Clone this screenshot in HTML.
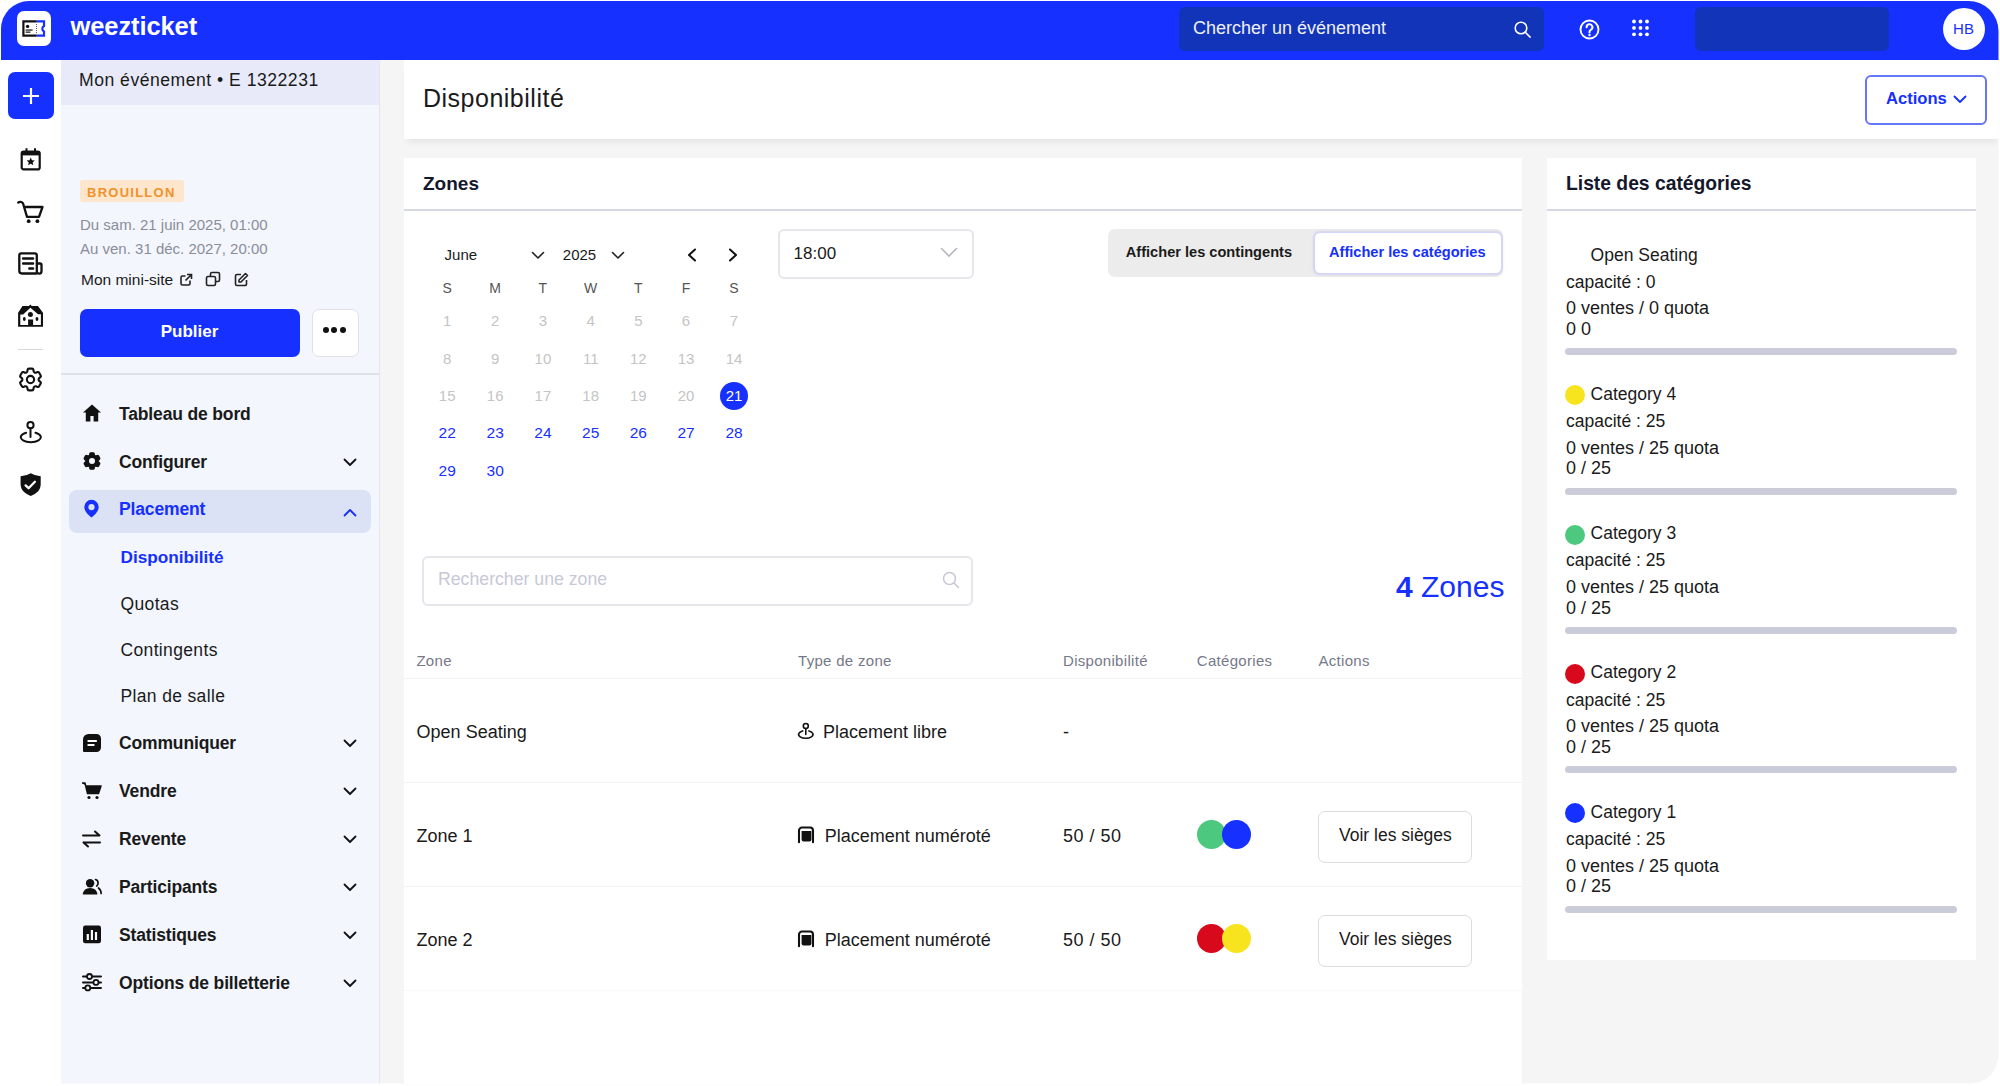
<!DOCTYPE html>
<html><head><meta charset="utf-8"><title>Disponibilité</title>
<style>
html,body{margin:0;padding:0;background:#fff;}
body{width:2000px;height:1086px;position:relative;overflow:hidden;font-family:"Liberation Sans",sans-serif;}
.t{position:absolute;line-height:1;white-space:nowrap;}
.r{position:absolute;}
#frame{position:absolute;left:0;top:0;width:2000px;height:1086px;overflow:hidden;clip-path:inset(1px 1.5px 2.5px 1px round 28px 30px 28px 0);}
</style></head><body><div id="frame">
<div class="r" style="left:380px;top:60px;width:1620px;height:1026px;background:#f5f5f5;"></div>
<div class="r" style="left:61px;top:60px;width:318px;height:1026px;background:#f3f6fd;border-right:1px solid #e4e6ee;"></div>
<div class="r" style="left:61px;top:60px;width:318px;height:45px;background:#e8eafa;"></div>
<div class="r" style="left:0px;top:0px;width:2000px;height:60px;background:#1530ff;"></div>
<div class="r" style="left:16.5px;top:11px;width:34.5px;height:35px;background:#fff;border-radius:7px;"></div>
<svg class="r" style="left:21px;top:19px;" width="25" height="19" viewBox="0 0 25 19">
<path d="M15.8 2.4H2.4v14.2h13.4" fill="none" stroke="#111" stroke-width="2.2"/>
<path d="M15.8 2.4H23v4.6a3 3 0 0 0 0 5.4v4.2h-7.2" fill="none" stroke="#1530ff" stroke-width="2.2"/>
<circle cx="6.6" cy="7.4" r="1.7" fill="#111"/>
<rect x="4.6" y="10.4" width="7" height="1.3" fill="#222"/>
<rect x="4.6" y="12.5" width="4.8" height="1.3" fill="#222"/>
<path d="M15.5 5v10" stroke="#333" stroke-width="0.8" stroke-dasharray="1 1"/>
</svg>
<div class="t " style="left:70.5px;top:14.31px;font-size:25.5px;font-weight:700;color:#fff;letter-spacing:-0.1px;">weezticket</div>
<div class="r" style="left:1178.5px;top:7px;width:365.5px;height:44px;background:#1234b8;border-radius:6px;"></div>
<div class="t " style="left:1193px;top:19.16px;font-size:18px;color:#eef0fb;">Chercher un événement</div>
<svg class="r" style="left:1513px;top:20px;" width="20" height="20" viewBox="0 0 20 20"><circle cx="8" cy="8" r="5.8" fill="none" stroke="#fff" stroke-width="1.6"/><path d="M12.3 12.3l4.8 4.8" stroke="#fff" stroke-width="1.6" stroke-linecap="round"/></svg>
<svg class="r" style="left:1578.2px;top:17.5px;" width="23" height="23" viewBox="0 0 23 23"><circle cx="11.5" cy="11.5" r="9" fill="none" stroke="#fff" stroke-width="1.9"/><path d="M8.6 9.2a2.9 2.9 0 1 1 4.2 2.6c-.9.5-1.3 1-1.3 2v.6" fill="none" stroke="#fff" stroke-width="2" stroke-linecap="round"/><circle cx="11.5" cy="17" r="1.2" fill="#fff"/></svg>
<svg class="r" style="left:1630px;top:18px;" width="21" height="20" viewBox="0 0 21 20"><circle cx="4.0" cy="3.5" r="1.9" fill="#fff"/><circle cx="4.0" cy="9.9" r="1.9" fill="#fff"/><circle cx="4.0" cy="16.3" r="1.9" fill="#fff"/><circle cx="10.5" cy="3.5" r="1.9" fill="#fff"/><circle cx="10.5" cy="9.9" r="1.9" fill="#fff"/><circle cx="10.5" cy="16.3" r="1.9" fill="#fff"/><circle cx="17.0" cy="3.5" r="1.9" fill="#fff"/><circle cx="17.0" cy="9.9" r="1.9" fill="#fff"/><circle cx="17.0" cy="16.3" r="1.9" fill="#fff"/></svg>
<div class="r" style="left:1695px;top:7px;width:193.5px;height:44px;background:#1234b8;border-radius:6px;"></div>
<div class="r" style="left:1942.5px;top:8px;width:42px;height:42px;background:#fff;border-radius:50%;"></div>
<div class="t " style="left:1963.5px;top:20.60px;font-size:15px;color:#1530ff;transform:translateX(-50%);">HB</div>
<div class="r" style="left:8px;top:72px;width:46px;height:47px;background:#1530ff;border-radius:7px;"></div>
<svg class="r" style="left:21px;top:86px;" width="20" height="20" viewBox="0 0 20 20"><path d="M10 2v16M2 10h16" stroke="#fff" stroke-width="2.2"/></svg>
<svg class="r" style="left:19px;top:147px;" width="24" height="25" viewBox="0 0 24 25"><rect x="2.7" y="4.6" width="18" height="17.8" rx="2" fill="none" stroke="#111" stroke-width="2.2"/><rect x="2.7" y="4.6" width="18" height="3.8" fill="#111"/><path d="M7.5 1.3v4M16 1.3v4" stroke="#111" stroke-width="2"/><path d="M11.7 10.6l1.25 2.6 2.85.3-2.15 1.9.65 2.8-2.6-1.5-2.6 1.5.65-2.8-2.15-1.9 2.85-.3z" fill="#111"/></svg>
<svg class="r" style="left:17px;top:199px;" width="27" height="25" viewBox="0 0 27 25"><path d="M1.2 3.6C2.6 2.4 5 2.6 6 4.3L10 17.9H22L25.5 8H7.6" fill="none" stroke="#111" stroke-width="2.3" stroke-linejoin="round" stroke-linecap="round"/><circle cx="11.7" cy="22.2" r="1.9" fill="#111"/><circle cx="20.4" cy="22.2" r="1.9" fill="#111"/></svg>
<svg class="r" style="left:14px;top:246px;" width="34" height="34" viewBox="0 0 34 34"><path d="M22.8 27.5H8A2.7 2.7 0 0 1 5.3 24.8V9.3A2 2 0 0 1 7.3 7.3H20.8A2 2 0 0 1 22.8 9.3V25.2A2.35 2.35 0 0 0 27.5 25.2V19A1.5 1.5 0 0 0 26 17.5H22.8" fill="none" stroke="#111" stroke-width="2.3" stroke-linejoin="round"/><path d="M9.1 12.5H19.1M9.1 17.5H19.1M15.3 22.5H19.1" stroke="#111" stroke-width="2.4" stroke-linecap="round"/></svg>
<svg class="r" style="left:14px;top:298px;" width="34" height="34" viewBox="0 0 34 34"><path fill-rule="evenodd" fill="#111" d="M4.1 14.7L8.5 8.1H15L16.4 6.6L17.8 8.1H23.9L29 14.7V28.8H4.1Z M6.3 16.4H9.1L16.4 9.7L24.1 16.3H26.9V26.9H19.1V21.6H14.1V26.9H6.3Z"/><circle cx="16.4" cy="16.5" r="2.5" fill="#111"/><ellipse cx="10.3" cy="21" rx="1.4" ry="2" fill="#111"/><ellipse cx="23" cy="21" rx="1.4" ry="2" fill="#111"/></svg>
<div class="r" style="left:18px;top:348.5px;width:25px;height:1.5px;background:#d8d8dc;"></div>
<svg class="r" style="left:16px;top:365px;" width="29" height="29" viewBox="0 0 24 24"><path d="M9.594 3.94c.09-.542.56-.94 1.11-.94h2.593c.55 0 1.02.398 1.11.94l.213 1.281c.063.374.313.686.645.87.074.04.147.083.22.127.325.196.72.257 1.075.124l1.217-.456a1.125 1.125 0 0 1 1.37.49l1.296 2.247a1.125 1.125 0 0 1-.26 1.431l-1.003.827c-.293.241-.438.613-.43.992a7.723 7.723 0 0 1 0 .255c-.008.378.137.75.43.991l1.004.827c.424.35.534.955.26 1.43l-1.298 2.247a1.125 1.125 0 0 1-1.369.491l-1.217-.456c-.355-.133-.75-.072-1.076.124a6.47 6.47 0 0 1-.22.128c-.331.183-.581.495-.644.869l-.213 1.281c-.09.543-.56.94-1.11.94h-2.594c-.55 0-1.019-.398-1.11-.94l-.213-1.281c-.062-.374-.312-.686-.644-.87a6.52 6.52 0 0 1-.22-.127c-.325-.196-.72-.257-1.076-.124l-1.217.456a1.125 1.125 0 0 1-1.369-.49l-1.297-2.247a1.125 1.125 0 0 1 .26-1.431l1.004-.827c.292-.24.437-.613.43-.991a6.932 6.932 0 0 1 0-.255c.007-.38-.138-.751-.43-.992l-1.004-.827a1.125 1.125 0 0 1-.26-1.43l1.297-2.247a1.125 1.125 0 0 1 1.37-.491l1.216.456c.356.133.751.072 1.076-.124.072-.044.146-.086.22-.128.332-.183.582-.495.644-.869l.214-1.28Z" fill="none" stroke="#111" stroke-width="1.75" stroke-linejoin="round"/><circle cx="12" cy="12" r="3" fill="none" stroke="#111" stroke-width="1.75"/></svg>
<svg class="r" style="left:19px;top:420px;" width="25" height="25" viewBox="0 0 25 25"><circle cx="11.5" cy="5.2" r="3.1" fill="none" stroke="#111" stroke-width="2"/><path d="M11.5 8.3v8.6" stroke="#111" stroke-width="2" stroke-linecap="round"/><path d="M7.1 12.8A10 5 0 1 0 16.5 12.8" fill="none" stroke="#111" stroke-width="2" stroke-linecap="round"/></svg>
<svg class="r" style="left:19px;top:472px;" width="24" height="26" viewBox="0 0 24 26"><path d="M11.8 1.2Q16 3.8 21.7 4.3V12.2C21.7 18 17.5 21.8 11.8 23.9 6.1 21.8 1.6 18 1.6 12.2V4.3Q7.6 3.8 11.8 1.2Z" fill="#111"/><path d="M6.6 13.4l3 2.8 6.3-6.4" fill="none" stroke="#fff" stroke-width="2.3" stroke-linecap="round" stroke-linejoin="round"/></svg>
<div class="t " style="left:79px;top:71.50px;font-size:17.6px;color:#1a1a1a;letter-spacing:0.5px;">Mon événement • E 1322231</div>
<div class="r" style="left:79.5px;top:180.3px;width:104px;height:21.7px;background:#fde6cc;border-radius:3px;"></div>
<div class="t " style="left:87px;top:185.90px;font-size:13px;font-weight:700;color:#f0922a;letter-spacing:1.25px;">BROUILLON</div>
<div class="t " style="left:80px;top:217.20px;font-size:15px;color:#8a8d99;">Du sam. 21 juin 2025, 01:00</div>
<div class="t " style="left:80px;top:240.80px;font-size:15px;color:#8a8d99;">Au ven. 31 déc. 2027, 20:00</div>
<div class="t " style="left:81px;top:271.88px;font-size:15.5px;color:#1a1a1a;">Mon mini-site</div>
<svg class="r" style="left:179px;top:273px;" width="14" height="14" viewBox="0 0 14 14"><path d="M11 7.5v3A1.5 1.5 0 0 1 9.5 12H3.5A1.5 1.5 0 0 1 2 10.5V4.5A1.5 1.5 0 0 1 3.5 3h3" fill="none" stroke="#222" stroke-width="1.6"/><path d="M8 1.5h4.5V6M12.5 1.5L6.5 7.5" fill="none" stroke="#222" stroke-width="1.6"/></svg>
<svg class="r" style="left:205px;top:271px;" width="16" height="16" viewBox="0 0 16 16"><rect x="1.5" y="5.5" width="9" height="9" rx="1.5" fill="none" stroke="#222" stroke-width="1.6"/><path d="M5.5 5.5V3a1.5 1.5 0 0 1 1.5-1.5h6A1.5 1.5 0 0 1 14.5 3v6a1.5 1.5 0 0 1-1.5 1.5h-2.5" fill="none" stroke="#222" stroke-width="1.6"/></svg>
<svg class="r" style="left:234px;top:272.3px;" width="15" height="15" viewBox="0 0 15 15"><path d="M7 2.5H3a1.5 1.5 0 0 0-1.5 1.5v8A1.5 1.5 0 0 0 3 13.5h8a1.5 1.5 0 0 0 1.5-1.5V8" fill="none" stroke="#222" stroke-width="1.6"/><path d="M11.5 1.5l2 2-6.5 6.5H5V8z" fill="none" stroke="#222" stroke-width="1.6" stroke-linejoin="round"/></svg>
<div class="r" style="left:79.5px;top:308.5px;width:220px;height:48.5px;background:#1530ff;border-radius:7px;"></div>
<div class="t " style="left:189.5px;top:323.41px;font-size:17px;font-weight:700;color:#fff;transform:translateX(-50%);">Publier</div>
<div class="r" style="left:311.5px;top:308.5px;width:47.5px;height:48.5px;background:#fff;border:1px solid #dfe1e6;border-radius:7px;box-sizing:border-box;"></div>
<div class="r" style="left:322.7px;top:327.2px;width:6.3px;height:6.3px;background:#111;border-radius:50%;"></div>
<div class="r" style="left:331.09999999999997px;top:327.2px;width:6.3px;height:6.3px;background:#111;border-radius:50%;"></div>
<div class="r" style="left:339.5px;top:327.2px;width:6.3px;height:6.3px;background:#111;border-radius:50%;"></div>
<div class="r" style="left:61px;top:373px;width:318px;height:2px;background:#dfe1e8;"></div>
<div class="r" style="left:69px;top:490px;width:302px;height:43px;background:#dce2f5;border-radius:8px;"></div>
<div class="t " style="left:119px;top:405.79px;font-size:17.5px;font-weight:700;color:#1a1a1a;letter-spacing:-0.15px;">Tableau de bord</div>
<div class="t " style="left:119px;top:453.89px;font-size:17.5px;font-weight:700;color:#1a1a1a;letter-spacing:-0.15px;">Configurer</div>
<svg class="r" style="left:343px;top:457.7px;" width="14" height="9" viewBox="0 0 14 9"><path d="M1.5 1.5l5.5 5.5 5.5-5.5" fill="none" stroke="#111" stroke-width="1.8" stroke-linecap="round" stroke-linejoin="round"/></svg>
<div class="t " style="left:119px;top:501.19px;font-size:17.5px;font-weight:700;color:#1530ff;letter-spacing:-0.15px;">Placement</div>
<svg class="r" style="left:343px;top:508px;" width="14" height="9" viewBox="0 0 14 9"><path d="M1.5 7.5l5.5-5.5 5.5 5.5" fill="none" stroke="#1530ff" stroke-width="1.8" stroke-linecap="round" stroke-linejoin="round"/></svg>
<div class="t " style="left:119px;top:735.49px;font-size:17.5px;font-weight:700;color:#1a1a1a;letter-spacing:-0.15px;">Communiquer</div>
<svg class="r" style="left:343px;top:739.3px;" width="14" height="9" viewBox="0 0 14 9"><path d="M1.5 1.5l5.5 5.5 5.5-5.5" fill="none" stroke="#111" stroke-width="1.8" stroke-linecap="round" stroke-linejoin="round"/></svg>
<div class="t " style="left:119px;top:783.19px;font-size:17.5px;font-weight:700;color:#1a1a1a;letter-spacing:-0.15px;">Vendre</div>
<svg class="r" style="left:343px;top:787px;" width="14" height="9" viewBox="0 0 14 9"><path d="M1.5 1.5l5.5 5.5 5.5-5.5" fill="none" stroke="#111" stroke-width="1.8" stroke-linecap="round" stroke-linejoin="round"/></svg>
<div class="t " style="left:119px;top:831.19px;font-size:17.5px;font-weight:700;color:#1a1a1a;letter-spacing:-0.15px;">Revente</div>
<svg class="r" style="left:343px;top:835px;" width="14" height="9" viewBox="0 0 14 9"><path d="M1.5 1.5l5.5 5.5 5.5-5.5" fill="none" stroke="#111" stroke-width="1.8" stroke-linecap="round" stroke-linejoin="round"/></svg>
<div class="t " style="left:119px;top:879.39px;font-size:17.5px;font-weight:700;color:#1a1a1a;letter-spacing:-0.15px;">Participants</div>
<svg class="r" style="left:343px;top:883.2px;" width="14" height="9" viewBox="0 0 14 9"><path d="M1.5 1.5l5.5 5.5 5.5-5.5" fill="none" stroke="#111" stroke-width="1.8" stroke-linecap="round" stroke-linejoin="round"/></svg>
<div class="t " style="left:119px;top:927.39px;font-size:17.5px;font-weight:700;color:#1a1a1a;letter-spacing:-0.15px;">Statistiques</div>
<svg class="r" style="left:343px;top:931.2px;" width="14" height="9" viewBox="0 0 14 9"><path d="M1.5 1.5l5.5 5.5 5.5-5.5" fill="none" stroke="#111" stroke-width="1.8" stroke-linecap="round" stroke-linejoin="round"/></svg>
<div class="t " style="left:119px;top:975.49px;font-size:17.5px;font-weight:700;color:#1a1a1a;letter-spacing:-0.15px;">Options de billetterie</div>
<svg class="r" style="left:343px;top:979.3px;" width="14" height="9" viewBox="0 0 14 9"><path d="M1.5 1.5l5.5 5.5 5.5-5.5" fill="none" stroke="#111" stroke-width="1.8" stroke-linecap="round" stroke-linejoin="round"/></svg>
<div class="t " style="left:120.5px;top:548.64px;font-size:17.2px;font-weight:700;color:#1530ff;letter-spacing:0px;">Disponibilité</div>
<div class="t " style="left:120.5px;top:595.69px;font-size:17.5px;color:#1a1a1a;letter-spacing:0.35px;">Quotas</div>
<div class="t " style="left:120.5px;top:642.19px;font-size:17.5px;color:#1a1a1a;letter-spacing:0.35px;">Contingents</div>
<div class="t " style="left:120.5px;top:688.49px;font-size:17.5px;color:#1a1a1a;letter-spacing:0.35px;">Plan de salle</div>
<svg class="r" style="left:82px;top:403px;" width="20" height="20" viewBox="0 0 20 20"><path d="M10 1.5L1 9.5h2.8V18.5h4.6v-5.5h3.2v5.5h4.6V9.5H19z" fill="#111"/></svg>
<svg class="r" style="left:81px;top:450.2px;" width="22" height="22" viewBox="0 0 24 24"><path d="M9.594 3.94c.09-.542.56-.94 1.11-.94h2.593c.55 0 1.02.398 1.11.94l.213 1.281c.063.374.313.686.645.87.074.04.147.083.22.127.325.196.72.257 1.075.124l1.217-.456a1.125 1.125 0 0 1 1.37.49l1.296 2.247a1.125 1.125 0 0 1-.26 1.431l-1.003.827c-.293.241-.438.613-.43.992a7.723 7.723 0 0 1 0 .255c-.008.378.137.75.43.991l1.004.827c.424.35.534.955.26 1.43l-1.298 2.247a1.125 1.125 0 0 1-1.369.491l-1.217-.456c-.355-.133-.75-.072-1.076.124a6.47 6.47 0 0 1-.22.128c-.331.183-.581.495-.644.869l-.213 1.281c-.09.543-.56.94-1.11.94h-2.594c-.55 0-1.019-.398-1.11-.94l-.213-1.281c-.062-.374-.312-.686-.644-.87a6.52 6.52 0 0 1-.22-.127c-.325-.196-.72-.257-1.076-.124l-1.217.456a1.125 1.125 0 0 1-1.369-.49l-1.297-2.247a1.125 1.125 0 0 1 .26-1.431l1.004-.827c.292-.24.437-.613.43-.991a6.932 6.932 0 0 1 0-.255c.007-.38-.138-.751-.43-.992l-1.004-.827a1.125 1.125 0 0 1-.26-1.43l1.297-2.247a1.125 1.125 0 0 1 1.37-.491l1.216.456c.356.133.751.072 1.076-.124.072-.044.146-.086.22-.128.332-.183.582-.495.644-.869l.214-1.28Z" fill="#111" stroke="#111" stroke-width="1.2" stroke-linejoin="round"/><circle cx="12" cy="12" r="3.3" fill="#f3f6fd"/></svg>
<svg class="r" style="left:83px;top:499px;" width="17" height="19" viewBox="0 0 17 19"><path d="M8.5 0.8a7.2 7.2 0 0 1 7.2 7.2c0 4.6-4.6 8.6-7.2 10.4C5.9 16.6 1.3 12.6 1.3 8a7.2 7.2 0 0 1 7.2-7.2z" fill="#1530ff"/><circle cx="8.5" cy="8.2" r="3.1" fill="#dce2f5"/></svg>
<svg class="r" style="left:82px;top:733px;" width="20" height="20" viewBox="0 0 20 20"><path d="M6.5 1H14.5A4.5 4.5 0 0 1 19 5.5V14.5A4.5 4.5 0 0 1 14.5 19H2A1 1 0 0 1 1 18V6.5A5.5 5.5 0 0 1 6.5 1Z" fill="#111"/><path d="M6.3 8.1h7.8M6.3 11.9h5.4" stroke="#fff" stroke-width="2" stroke-linecap="round"/></svg>
<svg class="r" style="left:81px;top:781px;" width="22" height="20" viewBox="0 0 22 20"><path d="M1 2h3l2.5 10.5h11L20 5H5.5" fill="#111" stroke="#111" stroke-width="1.5" stroke-linejoin="round"/><path d="M5.5 5H20l-2.5 7.5h-11z" fill="#111"/><circle cx="8" cy="16.5" r="1.6" fill="#111"/><circle cx="16" cy="16.5" r="1.6" fill="#111"/></svg>
<svg class="r" style="left:81px;top:829px;" width="21" height="20" viewBox="0 0 21 20"><path d="M2 6.5h16.5M14 2.5l4.5 4M19 13.5H2.5M7 17.5l-4.5-4" fill="none" stroke="#111" stroke-width="2" stroke-linecap="round"/></svg>
<svg class="r" style="left:81px;top:877px;" width="22" height="20" viewBox="0 0 22 20"><circle cx="9.1" cy="6.2" r="4.2" fill="#111"/><path d="M1.8 17.4c0-3.6 3.3-6.4 7.3-6.4s7.3 2.8 7.3 6.4z" fill="#111"/><path d="M14.5 2.5c1.8.5 2.6 2 2.6 3.6 0 1.2-.5 2.3-1.4 3M17.5 11c1.6 1.2 2.6 3 2.6 5.5" fill="none" stroke="#111" stroke-width="1.7" stroke-linecap="round"/></svg>
<svg class="r" style="left:82px;top:925px;" width="20" height="20" viewBox="0 0 20 20"><rect x="1" y="0.5" width="18" height="17.7" rx="2.2" fill="#111"/><path d="M5.8 9v6M9.9 5v10M14 7v8" stroke="#fff" stroke-width="2.2"/></svg>
<svg class="r" style="left:81px;top:972px;" width="21" height="21" viewBox="0 0 21 21"><path d="M2 4.5h18M2 10.4h18M2 15.9h18" stroke="#111" stroke-width="2" stroke-linecap="round"/><circle cx="8.5" cy="4.5" r="2.5" fill="#f3f6fd" stroke="#111" stroke-width="1.8"/><circle cx="15" cy="10.4" r="2.5" fill="#f3f6fd" stroke="#111" stroke-width="1.8"/><circle cx="6.8" cy="15.9" r="2.5" fill="#f3f6fd" stroke="#111" stroke-width="1.8"/></svg>
<div class="r" style="left:404px;top:60px;width:1596px;height:78.5px;background:#fff;box-shadow:0 6px 7px -3px rgba(0,0,0,0.07);"></div>
<div class="t " style="left:423px;top:85.74px;font-size:25px;color:#1a1a1a;letter-spacing:0.5px;">Disponibilité</div>
<div class="r" style="left:1865px;top:74.8px;width:121.5px;height:50px;border:2px solid #6577f7;border-radius:6px;background:#fff;box-sizing:border-box;"></div>
<div class="t " style="left:1886px;top:91.35px;font-size:16.6px;font-weight:700;color:#1530ff;">Actions</div>
<svg class="r" style="left:1952.5px;top:94.5px;" width="14" height="9" viewBox="0 0 14 9"><path d="M1.5 1.5l5.5 5.5 5.5-5.5" fill="none" stroke="#1530ff" stroke-width="1.8" stroke-linecap="round" stroke-linejoin="round"/></svg>
<div class="r" style="left:404px;top:158px;width:1118px;height:928px;background:#fff;"></div>
<div class="t " style="left:423px;top:173.52px;font-size:19px;font-weight:700;color:#15172a;">Zones</div>
<div class="r" style="left:404px;top:209px;width:1118px;height:1.6px;background:#d6d9e3;"></div>
<div class="t " style="left:444.6px;top:247.10px;font-size:15px;color:#1a1a1a;">June</div>
<svg class="r" style="left:531px;top:250.5px;" width="14" height="9" viewBox="0 0 14 9"><path d="M1.5 1.5l5.5 5.5 5.5-5.5" fill="none" stroke="#222" stroke-width="1.6" stroke-linecap="round" stroke-linejoin="round"/></svg>
<div class="t " style="left:562.8px;top:247.10px;font-size:15px;color:#1a1a1a;">2025</div>
<svg class="r" style="left:610.5px;top:250.5px;" width="14" height="9" viewBox="0 0 14 9"><path d="M1.5 1.5l5.5 5.5 5.5-5.5" fill="none" stroke="#222" stroke-width="1.6" stroke-linecap="round" stroke-linejoin="round"/></svg>
<svg class="r" style="left:686px;top:248px;" width="12" height="14" viewBox="0 0 12 14"><path d="M9 1.5L3 7l6 5.5" fill="none" stroke="#111" stroke-width="2" stroke-linecap="round" stroke-linejoin="round"/></svg>
<svg class="r" style="left:727px;top:248px;" width="12" height="14" viewBox="0 0 12 14"><path d="M3 1.5L9 7l-6 5.5" fill="none" stroke="#111" stroke-width="2" stroke-linecap="round" stroke-linejoin="round"/></svg>
<div class="t " style="left:447.2px;top:281.05px;font-size:14px;color:#555;transform:translateX(-50%);">S</div>
<div class="t " style="left:495.2px;top:281.05px;font-size:14px;color:#555;transform:translateX(-50%);">M</div>
<div class="t " style="left:542.9px;top:281.05px;font-size:14px;color:#555;transform:translateX(-50%);">T</div>
<div class="t " style="left:590.7px;top:281.05px;font-size:14px;color:#555;transform:translateX(-50%);">W</div>
<div class="t " style="left:638.3px;top:281.05px;font-size:14px;color:#555;transform:translateX(-50%);">T</div>
<div class="t " style="left:686px;top:281.05px;font-size:14px;color:#555;transform:translateX(-50%);">F</div>
<div class="t " style="left:734px;top:281.05px;font-size:14px;color:#555;transform:translateX(-50%);">S</div>
<div class="t " style="left:447.2px;top:312.50px;font-size:15px;color:#c4c4c4;transform:translateX(-50%);">1</div>
<div class="t " style="left:495.2px;top:312.50px;font-size:15px;color:#c4c4c4;transform:translateX(-50%);">2</div>
<div class="t " style="left:542.9px;top:312.50px;font-size:15px;color:#c4c4c4;transform:translateX(-50%);">3</div>
<div class="t " style="left:590.7px;top:312.50px;font-size:15px;color:#c4c4c4;transform:translateX(-50%);">4</div>
<div class="t " style="left:638.3px;top:312.50px;font-size:15px;color:#c4c4c4;transform:translateX(-50%);">5</div>
<div class="t " style="left:686px;top:312.50px;font-size:15px;color:#c4c4c4;transform:translateX(-50%);">6</div>
<div class="t " style="left:734px;top:312.50px;font-size:15px;color:#c4c4c4;transform:translateX(-50%);">7</div>
<div class="t " style="left:447.2px;top:350.80px;font-size:15px;color:#c4c4c4;transform:translateX(-50%);">8</div>
<div class="t " style="left:495.2px;top:350.80px;font-size:15px;color:#c4c4c4;transform:translateX(-50%);">9</div>
<div class="t " style="left:542.9px;top:350.80px;font-size:15px;color:#c4c4c4;transform:translateX(-50%);">10</div>
<div class="t " style="left:590.7px;top:350.80px;font-size:15px;color:#c4c4c4;transform:translateX(-50%);">11</div>
<div class="t " style="left:638.3px;top:350.80px;font-size:15px;color:#c4c4c4;transform:translateX(-50%);">12</div>
<div class="t " style="left:686px;top:350.80px;font-size:15px;color:#c4c4c4;transform:translateX(-50%);">13</div>
<div class="t " style="left:734px;top:350.80px;font-size:15px;color:#c4c4c4;transform:translateX(-50%);">14</div>
<div class="t " style="left:447.2px;top:388.20px;font-size:15px;color:#c4c4c4;transform:translateX(-50%);">15</div>
<div class="t " style="left:495.2px;top:388.20px;font-size:15px;color:#c4c4c4;transform:translateX(-50%);">16</div>
<div class="t " style="left:542.9px;top:388.20px;font-size:15px;color:#c4c4c4;transform:translateX(-50%);">17</div>
<div class="t " style="left:590.7px;top:388.20px;font-size:15px;color:#c4c4c4;transform:translateX(-50%);">18</div>
<div class="t " style="left:638.3px;top:388.20px;font-size:15px;color:#c4c4c4;transform:translateX(-50%);">19</div>
<div class="t " style="left:686px;top:388.20px;font-size:15px;color:#c4c4c4;transform:translateX(-50%);">20</div>
<div class="r" style="left:720px;top:382px;width:28px;height:28px;background:#1530ff;border-radius:50%;"></div>
<div class="t " style="left:734px;top:388.20px;font-size:15px;color:#fff;transform:translateX(-50%);">21</div>
<div class="t " style="left:447.2px;top:425.48px;font-size:15.5px;color:#1530ff;transform:translateX(-50%);">22</div>
<div class="t " style="left:495.2px;top:425.48px;font-size:15.5px;color:#1530ff;transform:translateX(-50%);">23</div>
<div class="t " style="left:542.9px;top:425.48px;font-size:15.5px;color:#1530ff;transform:translateX(-50%);">24</div>
<div class="t " style="left:590.7px;top:425.48px;font-size:15.5px;color:#1530ff;transform:translateX(-50%);">25</div>
<div class="t " style="left:638.3px;top:425.48px;font-size:15.5px;color:#1530ff;transform:translateX(-50%);">26</div>
<div class="t " style="left:686px;top:425.48px;font-size:15.5px;color:#1530ff;transform:translateX(-50%);">27</div>
<div class="t " style="left:734px;top:425.48px;font-size:15.5px;color:#1530ff;transform:translateX(-50%);">28</div>
<div class="t " style="left:447.2px;top:463.18px;font-size:15.5px;color:#1530ff;transform:translateX(-50%);">29</div>
<div class="t " style="left:495.2px;top:463.18px;font-size:15.5px;color:#1530ff;transform:translateX(-50%);">30</div>
<div class="r" style="left:778px;top:229px;width:195.5px;height:50px;border:2px solid #e6e6ec;border-radius:6px;box-sizing:border-box;"></div>
<div class="t " style="left:793.6px;top:244.61px;font-size:17px;color:#1a1a1a;">18:00</div>
<svg class="r" style="left:940px;top:247px;" width="18" height="11" viewBox="0 0 18 11"><path d="M1.5 1.5l7.5 7.5 7.5-7.5" fill="none" stroke="#b5b5c0" stroke-width="1.6" stroke-linecap="round"/></svg>
<div class="r" style="left:1107.5px;top:229px;width:395.5px;height:48px;background:#ececec;border-radius:7px;"></div>
<div class="r" style="left:1314px;top:232px;width:187.5px;height:41.5px;background:#fff;border:1.5px solid #d0d4f8;border-radius:6px;box-sizing:border-box;box-shadow:0 0 2px 1px rgba(90,100,240,.18);"></div>
<div class="t " style="left:1125.8px;top:245.24px;font-size:14.6px;font-weight:700;color:#1a1a1a;">Afficher les contingents</div>
<div class="t " style="left:1329px;top:245.24px;font-size:14.6px;font-weight:700;color:#1530ff;">Afficher les catégories</div>
<div class="r" style="left:422px;top:556px;width:551px;height:50px;border:2px solid #e6e6ec;border-radius:6px;box-sizing:border-box;"></div>
<div class="t " style="left:438px;top:570.82px;font-size:17.7px;color:#c8c8d6;">Rechercher une zone</div>
<svg class="r" style="left:942px;top:571px;" width="18" height="18" viewBox="0 0 18 18"><circle cx="7.5" cy="7.5" r="6" fill="none" stroke="#c8c8d6" stroke-width="1.6"/><path d="M12 12l4.5 4.5" stroke="#c8c8d6" stroke-width="1.6" stroke-linecap="round"/></svg>
<div class="t " style="left:1396px;top:571.61px;font-size:30px;font-weight:700;color:#1530ff;">4</div>
<div class="t " style="left:1421px;top:571.61px;font-size:30px;color:#1530ff;">Zones</div>
<div class="t " style="left:416.4px;top:652.80px;font-size:15px;color:#767989;letter-spacing:0.3px;">Zone</div>
<div class="t " style="left:798px;top:652.80px;font-size:15px;color:#767989;letter-spacing:0.3px;">Type de zone</div>
<div class="t " style="left:1063px;top:652.80px;font-size:15px;color:#767989;letter-spacing:0.3px;">Disponibilité</div>
<div class="t " style="left:1196.8px;top:652.80px;font-size:15px;color:#767989;letter-spacing:0.3px;">Catégories</div>
<div class="t " style="left:1318.5px;top:652.80px;font-size:15px;color:#767989;letter-spacing:0.3px;">Actions</div>
<div class="r" style="left:404px;top:677.5px;width:1118px;height:1.2px;background:#f2f2f4;"></div>
<div class="r" style="left:404px;top:781.5px;width:1118px;height:1.2px;background:#f2f2f4;"></div>
<div class="r" style="left:404px;top:885.5px;width:1118px;height:1.2px;background:#f2f2f4;"></div>
<div class="r" style="left:404px;top:989.5px;width:1118px;height:1px;background:#f8f8f9;"></div>
<div class="t " style="left:416.6px;top:722.76px;font-size:18px;color:#1a1a1a;">Open Seating</div>
<svg class="r" style="left:796px;top:722px;" width="19" height="18" viewBox="0 0 19 18"><circle cx="9.8" cy="4" r="2.5" fill="none" stroke="#111" stroke-width="1.6"/><path d="M9.8 6.5v6" stroke="#111" stroke-width="1.6" stroke-linecap="round"/><path d="M6.6 8.9A7.2 3.9 0 1 0 13 8.9" fill="none" stroke="#111" stroke-width="1.6" stroke-linecap="round"/></svg>
<div class="t " style="left:823px;top:722.76px;font-size:18px;color:#1a1a1a;">Placement libre</div>
<div class="t " style="left:1063px;top:722.76px;font-size:18px;color:#1a1a1a;">-</div>
<div class="t " style="left:416.6px;top:826.76px;font-size:18px;color:#1a1a1a;">Zone 1</div>
<svg class="r" style="left:797px;top:826px;" width="19" height="18" viewBox="0 0 19 18"><path d="M2 16.2V4.5A3 3 0 0 1 5 1.5H13A3 3 0 0 1 16 4.5V16.2" fill="none" stroke="#111" stroke-width="2.1" stroke-linecap="round"/><path d="M4.6 5H14.4V13.6A2 2 0 0 1 12.4 15.6H6.6A2 2 0 0 1 4.6 13.6Z" fill="#111"/></svg>
<div class="t " style="left:824.8px;top:826.76px;font-size:18px;color:#1a1a1a;">Placement numéroté</div>
<div class="t " style="left:1063px;top:826.76px;font-size:18px;color:#1a1a1a;letter-spacing:0.5px;">50 / 50</div>
<div class="r" style="left:1197px;top:819.5px;width:29px;height:29px;background:#4cc97e;border-radius:50%;"></div>
<div class="r" style="left:1221.5px;top:819.5px;width:29px;height:29px;background:#1530ff;border-radius:50%;"></div>
<div class="r" style="left:1318.3px;top:811px;width:154px;height:51.5px;border:1.5px solid #dcdce0;border-radius:7px;box-sizing:border-box;background:#fff;"></div>
<div class="t " style="left:1339px;top:827.19px;font-size:17.5px;color:#1a1a1a;">Voir les sièges</div>
<div class="t " style="left:416.6px;top:930.76px;font-size:18px;color:#1a1a1a;">Zone 2</div>
<svg class="r" style="left:797px;top:930px;" width="19" height="18" viewBox="0 0 19 18"><path d="M2 16.2V4.5A3 3 0 0 1 5 1.5H13A3 3 0 0 1 16 4.5V16.2" fill="none" stroke="#111" stroke-width="2.1" stroke-linecap="round"/><path d="M4.6 5H14.4V13.6A2 2 0 0 1 12.4 15.6H6.6A2 2 0 0 1 4.6 13.6Z" fill="#111"/></svg>
<div class="t " style="left:824.8px;top:930.76px;font-size:18px;color:#1a1a1a;">Placement numéroté</div>
<div class="t " style="left:1063px;top:930.76px;font-size:18px;color:#1a1a1a;letter-spacing:0.5px;">50 / 50</div>
<div class="r" style="left:1197px;top:923.5px;width:29px;height:29px;background:#d8091a;border-radius:50%;"></div>
<div class="r" style="left:1221.5px;top:923.5px;width:29px;height:29px;background:#f8e41e;border-radius:50%;"></div>
<div class="r" style="left:1318.3px;top:915px;width:154px;height:51.5px;border:1.5px solid #dcdce0;border-radius:7px;box-sizing:border-box;background:#fff;"></div>
<div class="t " style="left:1339px;top:931.19px;font-size:17.5px;color:#1a1a1a;">Voir les sièges</div>
<div class="r" style="left:1547px;top:158px;width:429px;height:802px;background:#fff;"></div>
<div class="t " style="left:1566px;top:173.66px;font-size:19.3px;font-weight:700;color:#15172a;">Liste des catégories</div>
<div class="r" style="left:1547px;top:209px;width:429px;height:1.6px;background:#d6d9e3;"></div>
<div class="t " style="left:1590.6px;top:246.59px;font-size:17.5px;color:#1a1a1a;">Open Seating</div>
<div class="t " style="left:1566px;top:273.79px;font-size:17.5px;color:#1a1a1a;">capacité : 0</div>
<div class="t " style="left:1566px;top:299.46px;font-size:18px;color:#1a1a1a;">0 ventes / 0 quota</div>
<div class="t " style="left:1566px;top:319.96px;font-size:18px;color:#1a1a1a;">0 0</div>
<div class="r" style="left:1565.2px;top:348.4px;width:391.5px;height:7px;background:#caccda;border-radius:4px;"></div>
<div class="r" style="left:1565.3px;top:385.2px;width:20px;height:20px;background:#f8e41e;border-radius:50%;"></div>
<div class="t " style="left:1590.6px;top:385.89px;font-size:17.5px;color:#1a1a1a;">Category 4</div>
<div class="t " style="left:1566px;top:413.09px;font-size:17.5px;color:#1a1a1a;">capacité : 25</div>
<div class="t " style="left:1566px;top:438.76px;font-size:18px;color:#1a1a1a;">0 ventes / 25 quota</div>
<div class="t " style="left:1566px;top:459.26px;font-size:18px;color:#1a1a1a;">0 / 25</div>
<div class="r" style="left:1565.2px;top:487.7px;width:391.5px;height:7px;background:#caccda;border-radius:4px;"></div>
<div class="r" style="left:1565.3px;top:524.5px;width:20px;height:20px;background:#4cc97e;border-radius:50%;"></div>
<div class="t " style="left:1590.6px;top:525.19px;font-size:17.5px;color:#1a1a1a;">Category 3</div>
<div class="t " style="left:1566px;top:552.39px;font-size:17.5px;color:#1a1a1a;">capacité : 25</div>
<div class="t " style="left:1566px;top:578.06px;font-size:18px;color:#1a1a1a;">0 ventes / 25 quota</div>
<div class="t " style="left:1566px;top:598.56px;font-size:18px;color:#1a1a1a;">0 / 25</div>
<div class="r" style="left:1565.2px;top:627.0px;width:391.5px;height:7px;background:#caccda;border-radius:4px;"></div>
<div class="r" style="left:1565.3px;top:663.8px;width:20px;height:20px;background:#d8091a;border-radius:50%;"></div>
<div class="t " style="left:1590.6px;top:664.49px;font-size:17.5px;color:#1a1a1a;">Category 2</div>
<div class="t " style="left:1566px;top:691.69px;font-size:17.5px;color:#1a1a1a;">capacité : 25</div>
<div class="t " style="left:1566px;top:717.36px;font-size:18px;color:#1a1a1a;">0 ventes / 25 quota</div>
<div class="t " style="left:1566px;top:737.86px;font-size:18px;color:#1a1a1a;">0 / 25</div>
<div class="r" style="left:1565.2px;top:766.3px;width:391.5px;height:7px;background:#caccda;border-radius:4px;"></div>
<div class="r" style="left:1565.3px;top:803.1px;width:20px;height:20px;background:#1530ff;border-radius:50%;"></div>
<div class="t " style="left:1590.6px;top:803.79px;font-size:17.5px;color:#1a1a1a;">Category 1</div>
<div class="t " style="left:1566px;top:830.99px;font-size:17.5px;color:#1a1a1a;">capacité : 25</div>
<div class="t " style="left:1566px;top:856.66px;font-size:18px;color:#1a1a1a;">0 ventes / 25 quota</div>
<div class="t " style="left:1566px;top:877.16px;font-size:18px;color:#1a1a1a;">0 / 25</div>
<div class="r" style="left:1565.2px;top:905.6px;width:391.5px;height:7px;background:#caccda;border-radius:4px;"></div>
</div></body></html>
